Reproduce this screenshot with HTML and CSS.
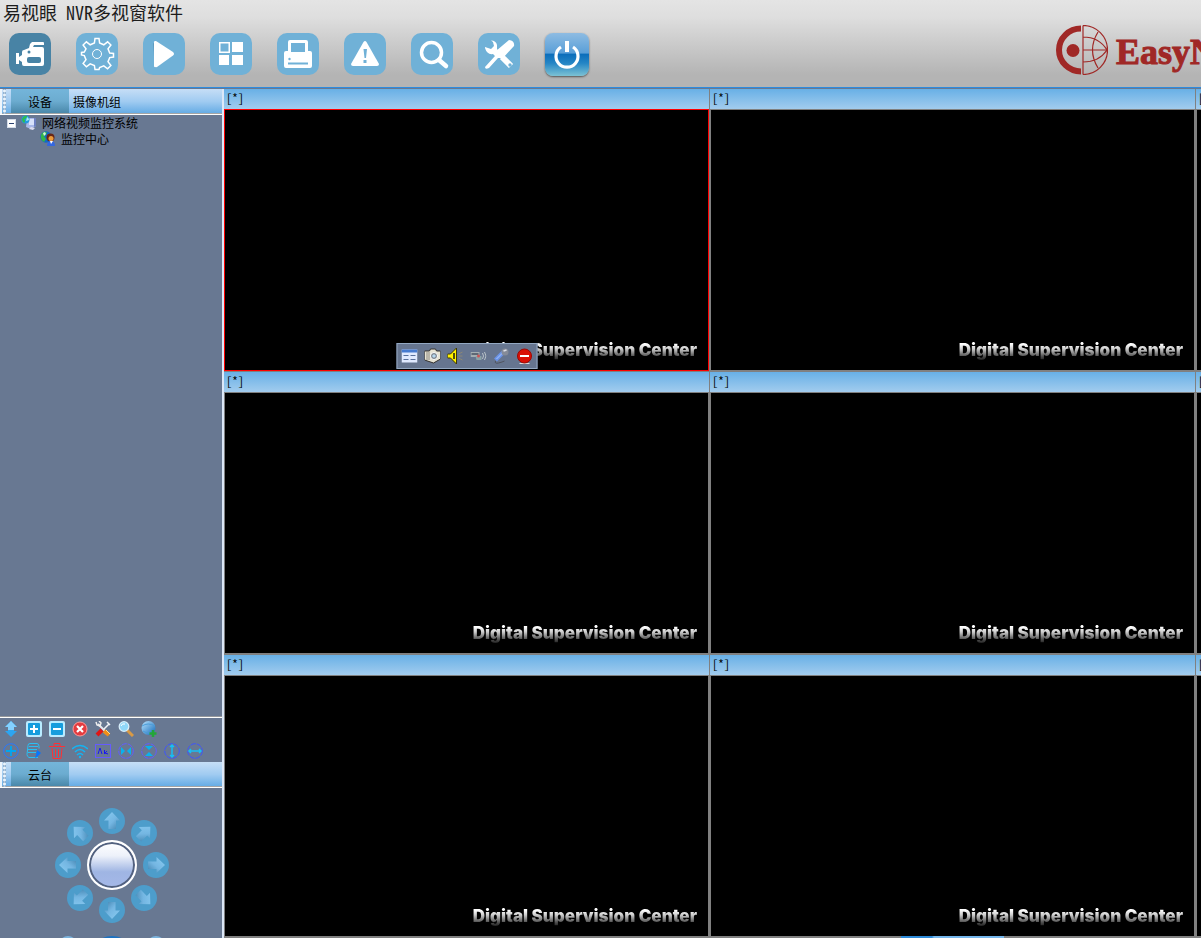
FILE: index.html
```html
<!DOCTYPE html>
<html lang="zh-CN">
<head>
<meta charset="utf-8">
<title>易视眼 NVR多视窗软件</title>
<link rel="stylesheet" href="styles.css">
</head>
<body>
<svg class="defs" aria-hidden="true">
  <defs>
    <linearGradient id="arrowFill" x1="0" y1="0" x2="1" y2="1"><stop offset="0" stop-color="#8accf2"/><stop offset=".55" stop-color="#74b6e2"/><stop offset="1" stop-color="#3f81ad"/></linearGradient>
    <linearGradient id="globe" x1="0" y1="0" x2="1" y2="1"><stop offset="0" stop-color="#b8e4ff"/><stop offset="1" stop-color="#1168b8"/></linearGradient>
    <symbol id="arrow" viewBox="0 0 26 26"><path d="M13 4 21 12.500H17V21H9.500V12.500H5Z" fill="url(#arrowFill)"/></symbol>
  </defs>
</svg>
<header class="top">
  <h1 class="title">易视眼 NVR多视窗软件</h1>
  <div class="top-row">
    <nav class="tools">
      <button class="tool active" aria-label="监控"><svg viewBox="0 0 42 42"><path fill="#fff" d="M23 9h11q1 0 1 1v2H25l-1 2h9q2 0 2 2v15q0 2-2 2H15q-2 0-2-2v-2l-3-2v4H7V20h3v4l3-2v-3q0-2 2-2l5-2 1-4Z"/><rect x="18" y="24" width="14" height="6" rx="2" fill="#4883a5"/><circle cx="20" cy="19" r="1.500" fill="#4883a5"/></svg></button>
      <button class="tool" aria-label="设置"><svg viewBox="0 0 42 42" fill="none" stroke="#fff" stroke-width="1.500"><path d="M19 5.500h4l.6 4.500 4.200 1.800 3.800-3 3.300 3.200-2.900 3.900 1.700 4.100 3.800.5v3.500l-3.800.6-1.700 4.100 2.900 3.800-3.300 3.300-3.800-2.900-4.200 1.700L23 36.500h-4l-.6-3.900-4.200-1.700-3.800 2.900-3.300-3.300 2.900-3.800L8.300 22.600 5.500 22v-2.500l2.800-.5L10 15.900 7.100 12l3.300-3.200 3.800 3 4.200-1.800Z"/><circle cx="21" cy="21" r="4.500" stroke-width="1"/></svg></button>
      <button class="tool" aria-label="播放"><svg viewBox="0 0 42 42"><path d="M10 10 29 21 12 35Z" fill="#47799b" opacity=".45"/><path d="M11 9q0-1.500 2-1L30 19q2 2 0 3.500L14 34q-3 1-3-1Z" fill="#fff"/></svg></button>
      <button class="tool" aria-label="分屏"><svg viewBox="0 0 42 42" fill="#fff"><path d="M9 9h11v11H9Zm1.500 1.500v8h8v-8Z" fill-rule="evenodd"/><path d="M22 9h11v10H22ZM9 22h10v10H9ZM22 22h11v10H22Z"/></svg></button>
      <button class="tool" aria-label="打印"><svg viewBox="0 0 42 42"><path d="M13 7h16q2 0 2 2v9h2q2 0 2 2v13q0 2-2 2H9q-2 0-2-2V20q0-2 2-2h2V9q0-2 2-2Z" fill="#fff"/><path d="M14 10h14v9H14ZM11 29.500h20v2H11Z" fill="#70b1d7"/><circle cx="12.500" cy="26" r="1.200" fill="#70b1d7"/></svg></button>
      <button class="tool" aria-label="报警"><svg viewBox="0 0 42 42"><path d="M19.500 9q1.500-2 3 0L35 31q0 2-2 2H9q-2 0-2-2Z" fill="#fff"/><path d="M19.500 16h3.500l-1 9h-1.500ZM19.500 27h3v3h-3Z" fill="#70b1d7"/></svg></button>
      <button class="tool" aria-label="搜索"><svg viewBox="0 0 42 42" fill="none" stroke="#fff"><circle cx="20.500" cy="19.500" r="10" stroke-width="3.500"/><path d="m28 27 7 6" stroke-width="4.500" stroke-linecap="round"/></svg></button>
      <button class="tool" aria-label="工具"><svg viewBox="0 0 42 42"><path d="m24 24 9 9" stroke="#fff" stroke-width="6"/><path d="M13 7.500q5 0 6 4.500v4l3 4-4 4-3-3q-6 1-8-6l0-1 6 2 3-3-1-4Z" fill="#fff"/><path d="M31 7q6 1 5 6L25 25l-5 0-9 10q-4 2-4-1l10-11 1-5Z" fill="#fff"/><circle cx="32" cy="32" r="1.700" fill="#70b1d7"/></svg></button>
      <button class="tool power" aria-label="退出"><svg viewBox="0 0 42 42" fill="none" stroke="#fff"><path d="M15 13a11 11 0 1 0 12 0" stroke-width="3.200"/><path d="M21 7v11" stroke-width="4"/></svg></button>
    </nav>
    <div class="brand">
      <svg class="brand-mark" viewBox="0 0 52 50" fill="none" stroke="#a02826"><path d="M25 3.500A22 21.500 0 0 0 25 46.500" stroke-width="6"/><circle cx="17" cy="25.500" r="6.500" fill="#a02826" stroke="none"/><path d="M27 .500v49M27 .500a24.500 24.500 0 0 1 0 49M27 25h24M42 7q-11 18 0 36M27 12q16 0 24 13M27 37q16 0 24-12" stroke-width="1.200"/></svg>
      <span class="brand-name">EasyN</span>
    </div>
  </div>
</header>
<div class="work">
  <aside class="side">
    <div class="tabs"><i class="grip"></i><button class="tab on">设备</button><button class="tab plain">摄像机组</button></div>
    <ul class="tree">
      <li class="node"><button class="fold" aria-label="折叠"></button><svg class="ico" viewBox="0 0 16 16"><path d="M6 3h8l1 8-5 3-5-2Z" fill="#a8b8e8"/><path d="M8 4h5v6H8Z" fill="#d8e2fa"/><path d="M13 3l2 0v8l-2 1Z" fill="#6d7fbf"/><path d="m8 14 4 1 2-2-4-1Z" fill="#dde"/><circle cx="4.500" cy="4.500" r="4" fill="#229ae0"/><path d="M1 4q2-4 5-3 0 3-3 3 2 2 0 4-2-2-2-4Z" fill="#2cc04b"/><path d="M6 2q2 1 2 3L5 6Z" fill="#a9f0e8"/></svg><span>网络视频监控系统</span></li>
      <li class="node child"><svg class="ico" viewBox="0 0 16 16"><circle cx="6" cy="6" r="5.700" fill="#1268c8"/><path d="M1 4q2-4 6-3l-1 3-2 1 2 3-2 3Q0 9 1 4Z" fill="#34b648"/><path d="m3 2 2-1 1 2-2 2Z" fill="#d2f3e0"/><circle cx="10.500" cy="6.500" r="4" fill="#692716"/><circle cx="11" cy="7.500" r="2.500" fill="#ed9b3b"/><path d="M7 15q0-5 4-5t4 5Z" fill="#3467e0"/><path d="m10 10 1 3 2-3Z" fill="#fff"/></svg><span>监控中心</span></li>
    </ul>
    <div class="actions">
      <button aria-label="移动"><svg viewBox="0 0 16 16"><path d="m8 0 6 6h-3v4h3l-6 6-6-6h3V6H2Z" fill="#2da5f0"/><path d="m8 0 6 6h-3v3H5V6H2Z" fill="#83d0ff"/></svg></button>
      <button aria-label="展开"><svg viewBox="0 0 16 16"><rect width="16" height="16" rx="2" fill="#b9ebff"/><rect x="2" y="2" width="12" height="12" rx="1" fill="#169ddd"/><path d="M8 4v8M4 8h8" stroke="#fff" stroke-width="2"/></svg></button>
      <button aria-label="收起"><svg viewBox="0 0 16 16"><rect width="16" height="16" rx="2" fill="#b9ebff"/><rect x="2" y="2" width="12" height="12" rx="1" fill="#169ddd"/><path d="M4 8h8" stroke="#fff" stroke-width="2"/></svg></button>
      <button aria-label="删除"><svg viewBox="0 0 16 16"><circle cx="8" cy="8" r="7" fill="#e53c40" stroke="#ff9a98"/><path d="m5 5 6 6M11 5l-6 6" stroke="#fff" stroke-width="2.200"/></svg></button>
      <button aria-label="维护"><svg viewBox="0 0 16 16"><path d="m3 3 9 9" stroke="#e6e8ee" stroke-width="2"/><path d="m1 1 1 3 3 1 1-3-2-2" fill="none" stroke="#eee" stroke-width="1.500"/><path d="m9 8 5-5M12 1l3 3" stroke="#f2f4f8" stroke-width="1.500"/><path d="m7 9-5 5" stroke="#e01515" stroke-width="4"/><path d="m9 10 5 4" stroke="#ef8e18" stroke-width="4"/><path d="m11 9 4 4" stroke="#ffe08a"/></svg></button>
      <button aria-label="查找"><svg viewBox="0 0 16 16"><path d="m9 9 6 6" stroke="#d99a45" stroke-width="3"/><circle cx="6" cy="5.500" r="4.800" fill="#8fd7f8" stroke="#d8eefa" stroke-width="1.300"/><path d="M3 5q1-3 4-2" stroke="#fff" fill="none"/></svg></button>
      <button aria-label="添加网络设备"><svg viewBox="0 0 16 16"><circle cx="7.500" cy="7" r="7" fill="url(#globe)"/><path d="M1 5q6-4 13 0M2 10q6 4 11 0" stroke="#4b9cd8" fill="none"/><path d="M12 9v7M8.500 12.500h7" stroke="#23a637" stroke-width="2.500"/></svg></button>
      <i class="break"></i>
      <button aria-label="添加"><svg viewBox="0 0 16 16" fill="none"><circle cx="8" cy="8" r="7.300" stroke="#2878ff"/><path d="M8 3v10M3 8h10" stroke="#00a7f0" stroke-width="1.800"/></svg></button>
      <button aria-label="编辑"><svg viewBox="0 0 16 16" fill="none" stroke="#2abff2"><path d="M12 14.500H3q-2-1-2-3l1-9q0-2 2-2h7q2 0 2 3v2M3 3.500h9M2 6.500h9M2 9.500h8"/><path d="m11 7 4 3-4 4-2 1 1-3Z" fill="#0875ff" stroke="none"/></svg></button>
      <button aria-label="清除"><svg viewBox="0 0 16 16" fill="none" stroke="#ff3034"><path d="M0 3.500h16M5 3V.500h6V3M3 5l1 10.500h8L13 5M6.500 6v8M9.500 6v8"/></svg></button>
      <button aria-label="无线"><svg viewBox="0 0 16 16" fill="none" stroke="#13b5f4" stroke-width="1.500"><path d="M0 6q8-7 16 0M3 9q5-5 10 0M5 12q3-3 6 0"/><circle cx="8" cy="14" r="1.200" fill="#13b5f4" stroke="none"/></svg></button>
      <button aria-label="自动"><svg viewBox="0 0 16 16" fill="none" stroke="#655bff"><rect x=".500" y="1.500" width="15" height="13"/><path d="m3 11 2-6 2 6M9.500 11V7M12 8l-2 2 3 1" stroke="#1818f0"/></svg></button>
      <button aria-label="水平翻转"><svg viewBox="0 0 16 16"><circle cx="8" cy="8" r="7.300" fill="none" stroke="#625cff" stroke-dasharray="5 1"/><path d="m3 4 4 4-4 4ZM13 4 9 8l4 4Z" fill="#08b2ef"/></svg></button>
      <button aria-label="垂直翻转"><svg viewBox="0 0 16 16"><circle cx="8" cy="8" r="7.300" fill="none" stroke="#625cff" stroke-dasharray="5 1"/><path d="M4 3h8L8 7ZM4 13h8L8 9Z" fill="#08b2ef"/></svg></button>
      <button aria-label="垂直巡航"><svg viewBox="0 0 16 16" fill="none"><circle cx="8" cy="8" r="7.300" stroke="#3d54ff" stroke-dasharray="5 1"/><path d="M8 3v10M6 4l2-2 2 2M6 12l2 2 2-2" stroke="#16bff5" stroke-width="1.500"/></svg></button>
      <button aria-label="水平巡航"><svg viewBox="0 0 16 16" fill="none"><circle cx="8" cy="8" r="7.300" stroke="#3d54ff" stroke-dasharray="5 1"/><path d="M2 8h12M4 6 2 8l2 2M12 6l2 2-2 2" stroke="#16bff5" stroke-width="1.500"/></svg></button>
    </div>
    <div class="tabs"><i class="grip"></i><button class="tab on">云台</button></div>
    <section class="ptz">
      <div class="dial">
        <button class="dir in-right in-bottom" aria-label="左上"><svg class="r315"><use href="#arrow"/></svg></button>
        <button class="dir out-top" aria-label="上"><svg><use href="#arrow"/></svg></button>
        <button class="dir in-left in-bottom" aria-label="右上"><svg class="r45"><use href="#arrow"/></svg></button>
        <button class="dir out-left" aria-label="左"><svg class="r270"><use href="#arrow"/></svg></button>
        <button class="home" aria-label="自动巡航"></button>
        <button class="dir out-right" aria-label="右"><svg class="r90"><use href="#arrow"/></svg></button>
        <button class="dir in-right in-top" aria-label="左下"><svg class="r225"><use href="#arrow"/></svg></button>
        <button class="dir out-bottom" aria-label="下"><svg class="r180"><use href="#arrow"/></svg></button>
        <button class="dir in-left in-top" aria-label="右下"><svg class="r135"><use href="#arrow"/></svg></button>
      </div>
      <div class="lens"><button class="lens-btn" aria-label="缩小"></button><button class="lens-btn mid" aria-label="变倍"></button><button class="lens-btn" aria-label="放大"></button></div>
    </section>
  </aside>
  <main class="wall">
    <section class="cell selected"><h2 class="cell-name">[*]</h2><div class="view"><span class="mark">Digital Supervision Center</span>
      <div class="float">
        <button aria-label="信息"><svg viewBox="0 0 16 16"><rect y="1.500" width="16" height="13" fill="#e0eaff"/><path d="M0 1.500h16v3H0Z" fill="#467bd0"/><path d="M2 7.500h5M9 7.500h5M2 11.500h5M9 11.500h5" stroke="#58709c"/></svg></button>
        <button aria-label="抓拍"><svg viewBox="0 0 16 16"><path d="m0 3 5 0 1-2h5l1 2h4v8l-7 4-9-3Z" fill="#e8e4d4" stroke="#35322f"/><path d="M2.500 4v8M4.500 4v8" stroke="#8a8880"/><circle cx="9.500" cy="8" r="3.500" fill="#777e86" stroke="#fff"/><circle cx="9.500" cy="8" r="1.800" fill="#b8d8ef"/></svg></button>
        <button aria-label="声音"><svg viewBox="0 0 16 16"><path d="M0 6h3l6-6v16l-6-6H0Z" fill="#fff100" stroke="#3e3800"/><path d="M6.500 5v6" stroke="#151515" stroke-width="1.500"/><path d="m11 6 4-2M11 8h4M11 10l4 2" stroke="#8b8776"/></svg></button>
        <button aria-label="录像"><svg viewBox="0 0 16 16"><path d="M0 4h9v5H0Z" fill="#a5aeb2"/><path d="M5 8h6v4H6Z" fill="#8ba3a7"/><path d="M1 6h7" stroke="#475060" stroke-width="1.500"/><circle cx="8" cy="8" r="1.500" fill="#cc5555"/><path d="M12 5q2 3 0 6M14 4q3 4 0 8" fill="none" stroke="#bac4c9"/></svg></button>
        <button aria-label="对讲"><svg viewBox="0 0 16 16"><path d="m2 12 8-8" stroke="#6b94e8" stroke-width="4"/><path d="m3 11 7-7" stroke="#a8c6ff"/><circle cx="11.500" cy="4" r="3.500" fill="#858b98"/><path d="m10 3 3-1" stroke="#dde0e8" stroke-width="1.500"/><path d="M2 13q-1 3 3 2t6-2" fill="none" stroke="#515560"/></svg></button>
        <button aria-label="关闭"><svg viewBox="0 0 16 16"><path d="M3 15.500h10" stroke="#ddd"/><circle cx="8" cy="8" r="7" fill="#da1005" stroke="#9b0904"/><path d="M3.500 8h9" stroke="#fff" stroke-width="2.200"/></svg></button>
      </div></div></section>
    <section class="cell"><h2 class="cell-name">[*]</h2><div class="view"><span class="mark">Digital Supervision Center</span></div></section>
    <section class="cell"><h2 class="cell-name">[*]</h2><div class="view"></div></section>
    <section class="cell"><h2 class="cell-name">[*]</h2><div class="view"><span class="mark">Digital Supervision Center</span></div></section>
    <section class="cell"><h2 class="cell-name">[*]</h2><div class="view"><span class="mark">Digital Supervision Center</span></div></section>
    <section class="cell"><h2 class="cell-name">[*]</h2><div class="view"></div></section>
    <section class="cell"><h2 class="cell-name">[*]</h2><div class="view"><span class="mark">Digital Supervision Center</span></div></section>
    <section class="cell"><h2 class="cell-name">[*]</h2><div class="view"><span class="mark">Digital Supervision Center</span></div></section>
    <section class="cell"><h2 class="cell-name">[*]</h2><div class="view"></div></section>
    <div class="dock"></div>
  </main>
</div>
</body>
</html>
```
FILE: styles.css
```css
* { box-sizing: border-box; }
body {
  margin: 0;
  height: 100vh;
  overflow: hidden;
  display: flex;
  flex-direction: column;
  font: 12px/16px "Noto Sans Mono CJK SC", "Noto Sans CJK SC", sans-serif;
  color: #000;
  background: #687892;
}
button { margin: 0; padding: 0; border: 0; background: none; font: inherit; color: inherit; display: block; }
svg { display: block; }
h1, h2, ul { margin: 0; padding: 0; font-weight: 400; list-style: none; }
.defs { position: absolute; width: 0; height: 0; }

.top {
  flex: none;
  background: linear-gradient(#e4e4e4, #dedede 20%, #b4b4b4 85%);
  border-bottom: 1px solid #687892;
  box-shadow: inset 0 -1px #2c8ce0;
}
.title { padding: 1px 3px; font-size: 18px; line-height: 22px; color: #1c1c1c; }
.top-row { display: flex; justify-content: space-between; height: 64px; }
.tools { display: flex; gap: 25px; padding: 9px 0 0 9px; }
.tool { width: 42px; height: 42px; border-radius: 10px; background: #70b1d7; }
.tool svg { width: 42px; height: 42px; }
.tool.active { background: #4883a5; }
.tool.power {
  width: 44px;
  height: 43px;
  padding: 0 1px;
  border-radius: 8px;
  background: linear-gradient(#8ebce2, #5a9fd8 46%, #0c6ebb 50%, #2485c5 70%, #7cc2d4);
  box-shadow: 0 1px 2px #555;
}
.brand { display: flex; gap: 8px; width: 145px; overflow: hidden; padding-top: 1px; }
.brand-mark { flex: none; width: 52px; height: 50px; }
.brand-name { font: bold 36px/54px "Liberation Serif", serif; color: #a02826; -webkit-text-stroke: 1px #a02826; }

.work { flex: 1; display: flex; min-height: 0; }
.side { flex: none; width: 224px; display: flex; flex-direction: column; min-height: 0; border-right: 2px solid #dce8f8; }
.tabs {
  flex: none;
  display: flex;
  height: 26px;
  background: linear-gradient(#c6def6, #a0cbf1 50%, #62aae4);
  border-bottom: 1px solid #fff;
  box-shadow: inset 0 -1px #a5a5a5;
}
.grip { width: 11px; border-left: 2px solid #eef5fc; background: radial-gradient(circle, #eaf3fb 1px, #7fa3c6 2px, transparent 2px) 0 0 / 5px 4px repeat-y; }
.tab { height: 24px; padding: 2px 4px 0; }
.tab.on { width: 58px; background: linear-gradient(#74b5da, #6cacd0 50%, #4a88aa); }
.tree { flex: 1; min-height: 0; }
.node { display: flex; align-items: center; height: 16px; padding-left: 7px; gap: 5px; }
.node.child { padding-left: 40px; }
.ico { width: 16px; height: 16px; }
.fold { width: 9px; height: 9px; border: 1px solid #d4dce8; background: linear-gradient(#2b4270, #2b4270) center / 5px 1px no-repeat, #fff; }
.actions {
  flex: none;
  display: flex;
  flex-wrap: wrap;
  gap: 6px 7px;
  padding: 3px 3px 3px;
  border-top: 1px solid #fff;
  box-shadow: 0 -1px #97999c;
}
.actions button, .actions svg, .float button, .float svg { width: 16px; height: 16px; }
.break { width: 50px; }

.ptz { flex: none; height: 150px; overflow: hidden; padding: 20px 0 0 55px; }
.dial { display: grid; grid-template: repeat(3, minmax(0, 1fr)) / repeat(3, minmax(0, 1fr)); width: 114px; height: 115px; }
.dir { width: 26px; height: 26px; border-radius: 50%; background: #4d9dcb; place-self: center; }
.dir svg { width: 26px; height: 26px; }
.in-right, .out-right { justify-self: end; }
.in-left, .out-left { justify-self: start; }
.in-bottom, .out-bottom { align-self: end; }
.in-top, .out-top { align-self: start; }
.r45 { transform: rotate(45deg); }
.r90 { transform: rotate(90deg); }
.r135 { transform: rotate(135deg); }
.r180 { transform: rotate(180deg); }
.r225 { transform: rotate(225deg); }
.r270 { transform: rotate(270deg); }
.r315 { transform: rotate(315deg); }
.home {
  width: 50px;
  height: 50px;
  margin: -6px;
  place-self: center;
  border: 2px solid #fff;
  border-radius: 50%;
  background: linear-gradient(#fff, #edf1fa 30%, #9fb5e3 65%, #a5b8e8);
  box-shadow: inset 0 0 0 2px #52617f;
}
.lens { display: flex; gap: 20px; padding: 13px 0 0 4px; }
.lens-btn { width: 18px; height: 18px; border-radius: 50%; background: #7cb4de; }
.lens-btn.mid { width: 30px; background: #1c72c2; }

.wall {
  position: relative;
  flex: 1;
  min-width: 0;
  display: grid;
  grid-template-columns: minmax(0, 1fr) minmax(0, 1fr) 5px;
  grid-auto-rows: minmax(0, 1fr);
}
.cell { display: flex; flex-direction: column; min-width: 0; border: 0 solid #808080; border-width: 0 1px 1px 0; }
.cell:nth-of-type(3n) { border-right: 0; }
.cell-name {
  flex: none;
  height: 20px;
  overflow: hidden;
  white-space: nowrap;
  padding: 1px 2px 0;
  font-size: 12px;
  line-height: 16px;
  background: linear-gradient(#68b0e6, #a2ccee);
}
.view { position: relative; flex: 1; display: flex; align-items: flex-end; justify-content: flex-end; padding: 0 11px 10px; background: #000; border: 1px solid #808080; }
.cell:nth-of-type(3n) .view { padding: 0; border-right: 0; }
.cell.selected .view { border-color: #f00; }
.mark {
  font: 900 17px/20px Inter, sans-serif;
  white-space: nowrap;
  color: transparent;
  background: linear-gradient(#fff 20%, #ccc 45%, #555 80%, #222);
  background-clip: text;
  -webkit-background-clip: text;
}
.float {
  position: absolute;
  left: 50%;
  bottom: 1px;
  transform: translateX(-50%);
  display: flex;
  gap: 7px;
  padding: 4px;
  border: 1px solid #93a8c2;
  background: #66758f;
}
.dock { position: absolute; right: 197px; bottom: 0; width: 103px; height: 2px; background: linear-gradient(90deg, #2d8ad8 30%, #74b6ec 32%); }
```
